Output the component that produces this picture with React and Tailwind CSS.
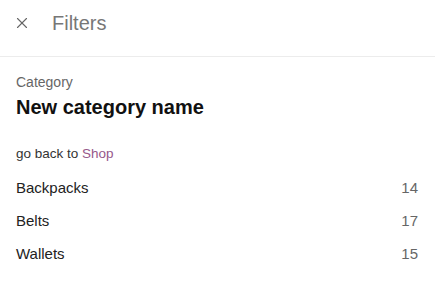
import { X } from "lucide-react";

const categorias = [
  { nombre: "Backpacks", total: 14 },
  { nombre: "Belts", total: 17 },
  { nombre: "Wallets", total: 15 },
];

const App = () => {
  return (
    <div className="w-[435px] h-[281px] bg-white font-['Liberation_Sans',Arial,sans-serif] overflow-hidden">
      {/* Cabecera */}
      <div className="h-[57px] border-b border-[#ececec]">
        <div className="h-[46px] flex items-center">
          <button className="w-[44px] h-[46px] flex items-center justify-center text-[#666]">
            <X size={18} strokeWidth={1.5} />
          </button>
          <h2 className="ml-[8px] text-[20px] text-[#777] leading-none">Filters</h2>
        </div>
      </div>

      {/* Contenido */}
      <div className="px-4 pt-[16px]">
        <p className="text-[14px] text-[#666] leading-[18px]">Category</p>
        <h1 className="text-[20px] font-bold text-[#111] leading-[26px] mt-[3px]">
          New category name
        </h1>

        <p className="text-[13.5px] text-[#333] mt-[25px] leading-[18px]">
          go back to <a href="#" className="text-[#96588a]">Shop</a>
        </p>

        <ul className="mt-[9px]">
          {categorias.map((c) => (
            <li
              key={c.nombre}
              className="flex justify-between items-center h-[33px] text-[15px]"
            >
              <span className="text-[#222]">{c.nombre}</span>
              <span className="text-[#666] pr-[1px]">{c.total}</span>
            </li>
          ))}
        </ul>
      </div>
    </div>
  );
};

export default App;
